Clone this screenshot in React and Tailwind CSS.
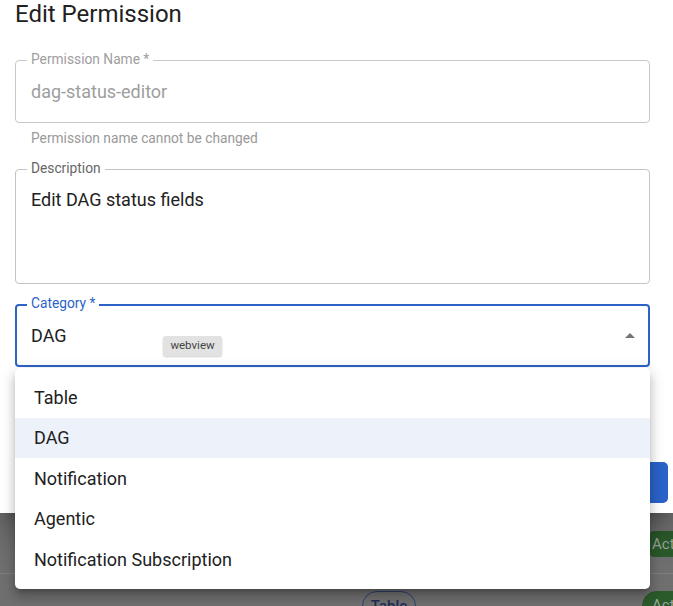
export default function App() {
  const items = ["Table", "DAG", "Notification", "Agentic", "Notification Subscription"];
  return (
    <div className="relative w-[673px] h-[606px] overflow-hidden bg-[#6f6f6f] font-['Roboto',sans-serif] flex flex-col">
      {/* Dialog */}
      <div className="relative z-10 h-[513px] shrink-0 bg-white flex flex-col shadow-[0_11px_15px_-7px_rgba(0,0,0,0.25),0_20px_30px_3px_rgba(0,0,0,0.16)]">
        <div className="pl-[15px] pr-[23px] flex flex-col">
          <h2 className="pt-[0px] text-[24px] leading-[29px] font-normal text-[#212121]">Edit Permission</h2>

          {/* Permission Name */}
          <div className="relative mt-[31px] h-[63px] rounded-[4px] border border-[#c8c8c8] flex items-center pl-[15px]">
            <span className="absolute left-[11px] top-[-11px] bg-white px-[4px] text-[13.75px] leading-[18px] text-[#9e9e9e]">
              Permission Name *
            </span>
            <span className="text-[18px] leading-[26px] text-[#9e9e9e]">dag-status-editor</span>
          </div>
          <p className="mt-[4px] pl-[16px] text-[13.75px] leading-[22px] text-[#999999]">
            Permission name cannot be changed
          </p>

          {/* Description */}
          <div className="relative mt-[20px] h-[115px] rounded-[4px] border border-[#c4c4c4] flex items-start pl-[15px] pt-[17px]">
            <span className="absolute left-[11px] top-[-11px] bg-white px-[4px] text-[13.75px] leading-[18px] text-[#666666]">
              Description
            </span>
            <span className="text-[18px] leading-[26px] text-[#212121]">Edit DAG status fields</span>
          </div>

          {/* Category */}
          <div className="relative mt-[20px] h-[63px] rounded-[4px] border-2 border-[#2c63c6] flex items-center pl-[14px] pr-[13px]">
            <span className="absolute left-[10px] top-[-12px] bg-white px-[4px] text-[13.75px] leading-[18px] text-[#2c63c6]">
              Category *
            </span>
            <span className="text-[18px] leading-[26px] text-[#212121]">DAG</span>
            <svg className="ml-auto w-[10px] h-[5px]" viewBox="0 0 10 5">
              <path d="M0 5 L5 0 L10 5 Z" fill="#757575" />
            </svg>
            <span className="absolute left-[146px] top-[30px] w-[59px] h-[20px] rounded-[3px] bg-[#e2e2e2] shadow-[0_1px_2px_rgba(0,0,0,0.2)] flex items-center justify-center text-[11.5px] text-[#444444] font-['Roboto',sans-serif]">
              webview
            </span>
          </div>
        </div>

        <div className="flex-1" />
        <div className="flex justify-end pr-[5px] pb-[10px]">
          <button className="w-[96px] h-[41px] rounded-[5px] bg-[#2a62c8] text-white text-[15px] font-medium">
            Save
          </button>
        </div>
      </div>

      {/* Backdrop table */}
      <div className="flex-1 flex flex-col">
        <div className="h-[61px] shrink-0 border-b border-[#7d7d7d] flex items-start pt-[18px] pl-[649px]">
          <div className="shrink-0 w-[70px] h-[26px] rounded-[5px] bg-[#2b5a2b] flex items-center pl-[3px] text-[15px] text-[#9aa59a]">
            Active
          </div>
        </div>
        <div className="flex items-start pt-[17px] pl-[362px]">
          <div className="shrink-0 w-[54px] h-[30px] rounded-full border border-[#2c3f70] flex items-start justify-center pt-[3px] text-[15px] font-medium text-[#1f2d55]">
            Table
          </div>
          <div className="ml-[226px] shrink-0 w-[70px] h-[30px] rounded-full bg-[#2b5a2b] flex items-start pl-[10px] pt-[3px] text-[15px] text-[#9aa59a]">
            Active
          </div>
        </div>
      </div>

      {/* Dropdown menu */}
      <ul className="absolute z-20 left-[15px] top-[368px] w-[635px] py-[9px] bg-white rounded-[5px] shadow-[0_5px_5px_-3px_rgba(0,0,0,0.2),0_8px_10px_1px_rgba(0,0,0,0.14),0_3px_14px_2px_rgba(0,0,0,0.12)]">
        {items.map((it) => (
          <li
            key={it}
            className={
              it === "DAG"
                ? "h-[40.5px] flex items-center pl-[19px] text-[18px] text-[#212121] bg-[#edf2fa]"
                : "h-[40.5px] flex items-center pl-[19px] text-[18px] text-[#212121]"
            }
          >
            {it}
          </li>
        ))}
      </ul>
    </div>
  );
}
